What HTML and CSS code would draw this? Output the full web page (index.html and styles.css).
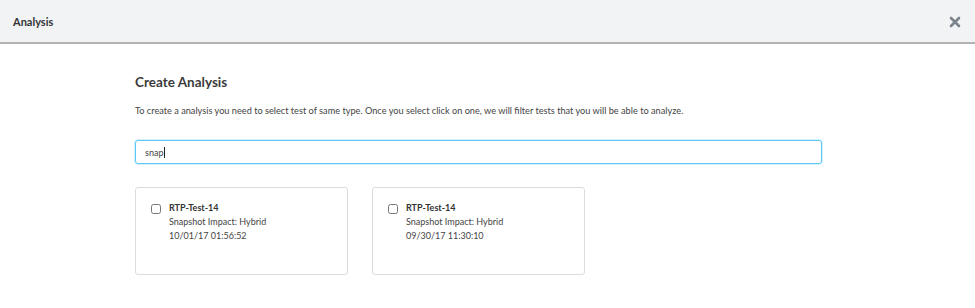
FILE: index.html
```html
<!DOCTYPE html>
<html lang="en">

<head>
    <meta charset="UTF-8">
    <meta name="viewport" content="width=device-width, initial-scale=1.0">
    <title>Analysis</title>
    <link rel="stylesheet" href="styles.css">
</head>

<body>
    <header class="modal-header">
        <h1 class="modal-title">Analysis</h1>
        <button type="button" class="btn-close" aria-label="Close">
            <svg width="12" height="12" viewBox="0 0 12 12">
                <path d="M2 2L10 10M10 2L2 10" stroke="#7b848d" stroke-width="2.6" stroke-linecap="round" />
            </svg>
        </button>
    </header>

    <main class="modal-body">
        <h2 class="section-title">Create Analysis</h2>
        <p class="section-desc">To create a analysis you need to select test of same type. Once you select click on one, we will filter tests that you will be able to analyze.</p>

        <div class="search">snap<span class="caret"></span></div>

        <ul class="test-list">
            <li class="test-card">
                <input type="checkbox" class="test-check">
                <div class="test-info">
                    <strong class="test-name">RTP-Test-14</strong>
                    <span>Snapshot Impact: Hybrid</span>
                    <span>10/01/17 01:56:52</span>
                </div>
            </li>
            <li class="test-card">
                <input type="checkbox" class="test-check">
                <div class="test-info">
                    <strong class="test-name">RTP-Test-14</strong>
                    <span>Snapshot Impact: Hybrid</span>
                    <span>09/30/17 11:30:10</span>
                </div>
            </li>
        </ul>
    </main>
</body>

</html>
```

FILE: styles.css
```css
html,
body {
    margin: 0;
    padding: 0;
    background: #fff;
    font-family: "Lato", "Liberation Sans", sans-serif;
    color: #333;
}

ul,
li {
    list-style: none;
    margin: 0;
    padding: 0;
}

button {
    cursor: pointer;
    border: none;
    background: none;
    padding: 0;
}

/* 헤더 */
.modal-header {
    height: 42px;
    background: #f2f3f5;
    border-bottom: 2px solid #b3b3b3;
    display: flex;
    align-items: center;
    justify-content: space-between;
    padding: 0 14px 0 13px;
}

.modal-title {
    margin: 0;
    font-size: 11px;
    font-weight: 700;
    color: #333;
}

.btn-close {
    display: flex;
    margin-top: 2px;
}

/* 본문 */
.modal-body {
    padding: 28px 153px 0 135px;
}

.section-title {
    margin: 0;
    font-size: 13.5px;
    font-weight: 700;
    color: #3b3b3b;
    line-height: 20px;
}

.section-desc {
    margin: 13px 0 0;
    font-size: 9.2px;
    line-height: 12px;
    color: #444;
}

/* 검색창 (포커스 상태) */
.search {
    display: flex;
    align-items: center;
    box-sizing: border-box;
    width: 687px;
    height: 24px;
    margin-top: 23px;
    padding: 0 9px;
    border: 1.5px solid #5cc9f5;
    border-radius: 3px;
    box-shadow: 0 0 0 1px #d3f1fd;
    font-size: 9px;
    color: #444;
}

.caret {
    display: inline-block;
    width: 1px;
    height: 11px;
    margin-left: 1px;
    background: #222;
}

/* 카드 목록 */
.test-list {
    display: flex;
    gap: 24px;
    margin-top: 23px;
}

.test-card {
    box-sizing: border-box;
    width: 213px;
    height: 88px;
    border: 1px solid #dcdcdc;
    border-radius: 3px;
    display: flex;
    align-items: flex-start;
    padding: 13px 15px;
}

.test-check {
    width: 10px;
    height: 10px;
    margin: 3px 8px 0 0;
}

.test-info {
    display: flex;
    flex-direction: column;
    font-size: 9px;
    line-height: 14px;
    color: #444;
}

.test-name {
    font-weight: 700;
    color: #333;
}
```
